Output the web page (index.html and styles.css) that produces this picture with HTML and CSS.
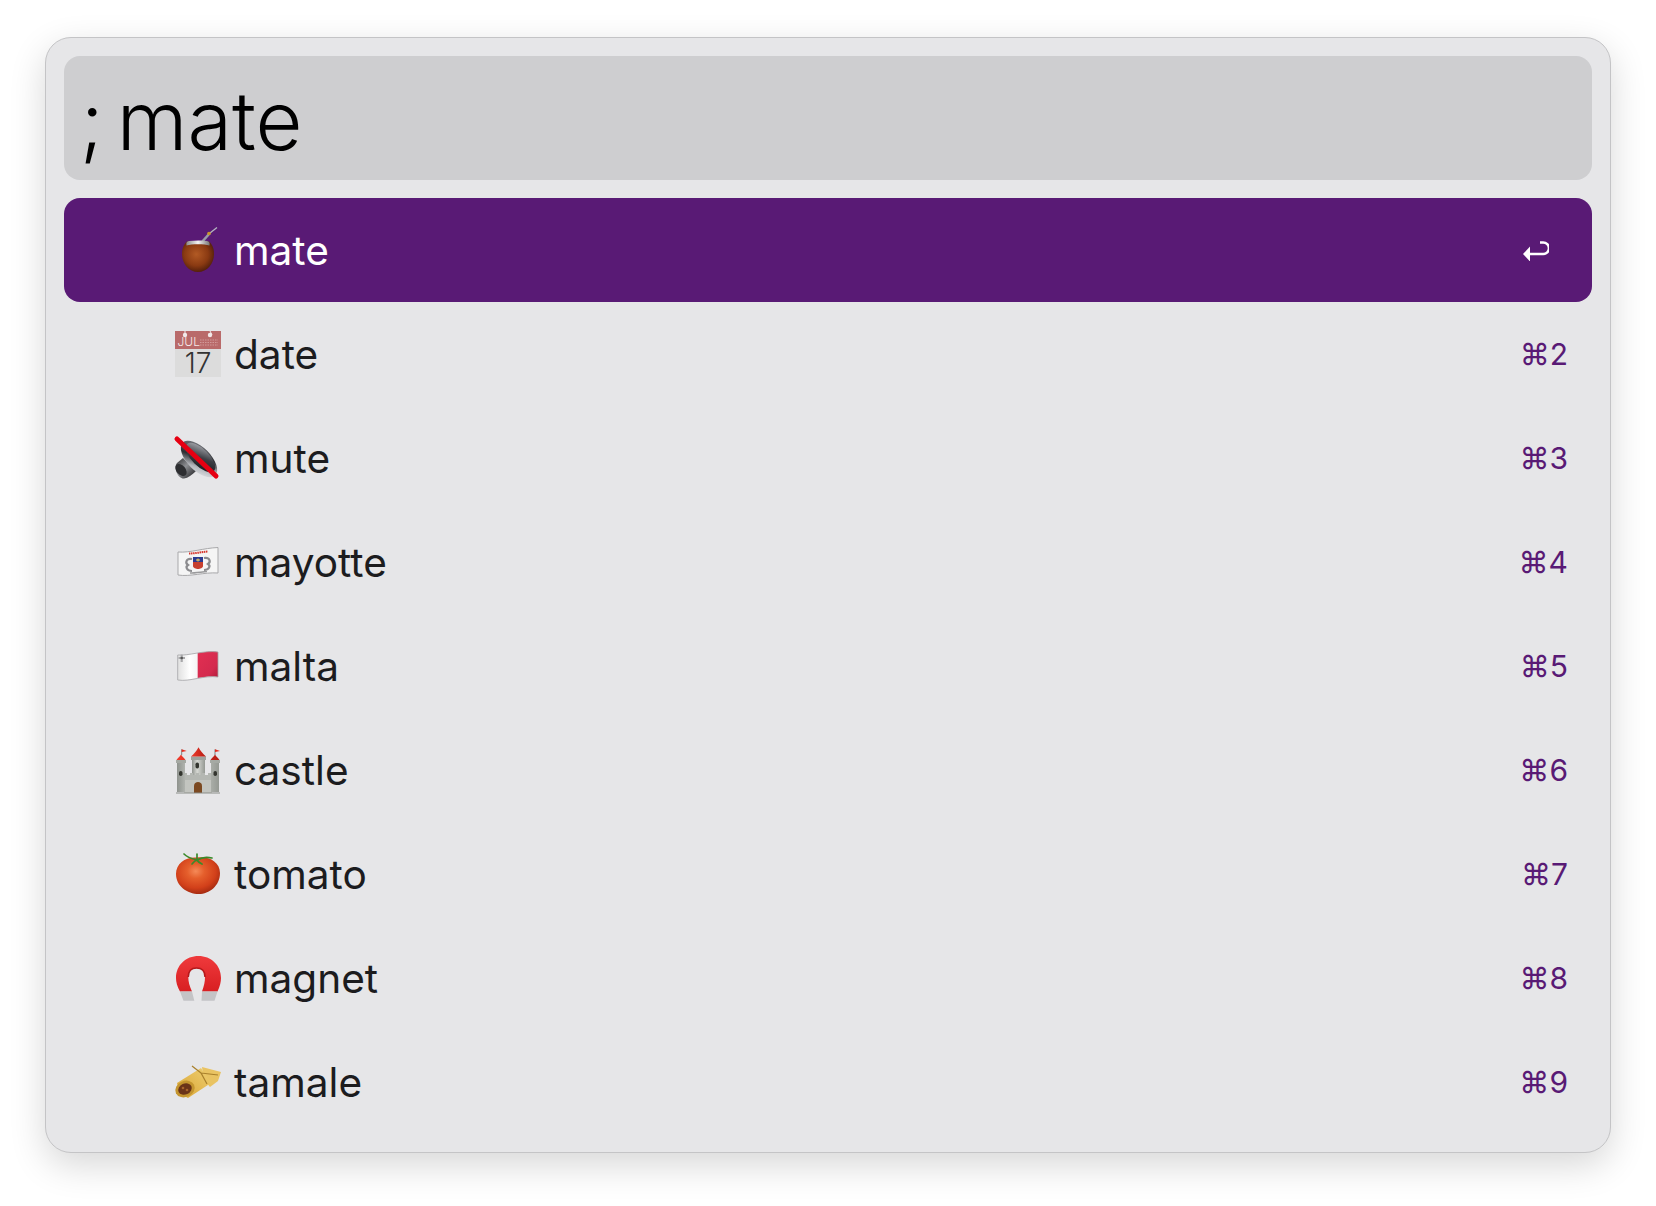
FILE: index.html
```html
<!DOCTYPE html>
<html lang="en">
<head>
<meta charset="utf-8">
<title>; mate</title>
<link rel="stylesheet" href="styles.css">
</head>
<body>
<main class="panel">
  <div class="query">; mate</div>
  <ul class="results">
    <li class="row selected">
      <svg class="icon" viewBox="0 0 48 48">
        <defs><radialGradient id="gourd" cx=".45" cy=".42" r=".62"><stop offset="0" stop-color="#b25a24"/><stop offset=".6" stop-color="#8a3a12"/><stop offset="1" stop-color="#4a1b0a"/></radialGradient>
        <linearGradient id="rim" x1="0" x2="1" y1="0" y2="0"><stop offset="0" stop-color="#8a8a8a"/><stop offset=".5" stop-color="#f4f4f4"/><stop offset="1" stop-color="#777"/></linearGradient></defs>
        <path d="M27 17 36 7" stroke="#9a9ca6" stroke-width="2.600" fill="none"/>
        <path d="M36 7 43 1.500" stroke="#b5b7c0" stroke-width="1.300" fill="none"/>
        <circle cx="35" cy="7.500" r="1.800" fill="#c9962c"/>
        <path d="M8 28C8 22 10 18 13 15.500H35C38 18 40 22 40 28 40 38 33 46 24 46S8 38 8 28Z" fill="url(#gourd)"/>
        <path d="M12.500 19.500C12 16.500 12.700 15.500 15 15 21 14.200 28 14.200 33 15 35.300 15.500 36 16.500 35.500 19.500 30 17.800 18 17.800 12.500 19.500Z" fill="url(#rim)"/>
      </svg>
      <span class="label">mate</span>
      <svg class="enter" viewBox="0 0 26 20">
        <path d="M17 1.500h3.200a5.700 5.700 0 0 1 0 11.500H5" fill="none" stroke="#fff" stroke-width="2.500"/>
        <path d="M0 13 7 5.500v15Z" fill="#fff"/>
      </svg>
    </li>
    <li class="row">
      <svg class="icon" viewBox="0 0 48 48">
        <rect x="1" y="18" width="46" height="29" fill="#dcdcdc"/>
        <rect x="1" y="1" width="46" height="18" fill="#b96a6a"/>
        <text class="cal-month" x="3.500" y="16">JUL</text>
        <path d="M26 10h18M26 12.500h18M26 15h18" stroke="#d29a9a" stroke-width="1.100" stroke-dasharray="1.500 1"/>
        <path d="M11 1V5M36 1 38 5" stroke="#f1eaea" stroke-width="1"/>
        <circle cx="11" cy="5" r="2.200" fill="#f1eaea"/><circle cx="36" cy="5" r="2.200" fill="#f1eaea"/>
        <text class="cal-day" x="24" y="43" text-anchor="middle">17</text>
      </svg>
      <span class="label">date</span><span class="keys">⌘2</span>
    </li>
    <li class="row">
      <svg class="icon" viewBox="0 0 48 48">
        <defs><linearGradient id="cone" x1="0" x2="1" y1="1" y2="0"><stop offset="0" stop-color="#f2f3f5"/><stop offset=".3" stop-color="#b4b7bc"/><stop offset=".55" stop-color="#2c2d31"/><stop offset="1" stop-color="#8d9096"/></linearGradient>
        <linearGradient id="coneInner" x1="0" x2="1" y1="1" y2="0"><stop offset="0" stop-color="#111214"/><stop offset=".5" stop-color="#3c3e44"/><stop offset="1" stop-color="#c0c2c7"/></linearGradient>
        <linearGradient id="driver" x1="0" x2="1" y1="0" y2="1"><stop offset="0" stop-color="#2a2a2c"/><stop offset=".45" stop-color="#8d8f93"/><stop offset="1" stop-color="#161618"/></linearGradient></defs>
        <path d="M9 24 3 29C-1 34 4 45 10 44.500 14 44 18 41 22 37Z" fill="url(#driver)"/>
        <ellipse cx="7" cy="36" rx="4.500" ry="7" transform="rotate(-40 7 36)" fill="#2d2e31"/>
        <ellipse cx="25" cy="25" rx="11.500" ry="23" transform="rotate(-45 25 25)" fill="url(#cone)"/>
        <ellipse cx="26.500" cy="23.500" rx="8.500" ry="19" transform="rotate(-45 26.500 23.500)" fill="url(#coneInner)"/>
        <path d="M3 5 42 42" stroke="#e60012" stroke-width="5" stroke-linecap="round"/>
      </svg>
      <span class="label">mute</span><span class="keys">⌘3</span>
    </li>
    <li class="row">
      <svg class="icon" viewBox="0 0 48 48">
        <path d="M4 14C16 15 30 10 44 9.500V35C30 34 16 39 4 37Z" fill="#f5f5f5" stroke="#a9a9ab" stroke-width="1"/>
        <path d="M15 15.500C21 15.500 28 14 34 13.500" stroke="#d6372e" stroke-width="2" stroke-dasharray="1.500 .6" fill="none"/>
        <path d="M19 19H29V24H19Z" fill="#2b3a90"/>
        <path d="M19 24H29V28C29 30 26 31 24 31S19 30 19 28Z" fill="#c7402f"/>
        <path d="M24 20.500v3M22 22h4" stroke="#f2d25a" stroke-width="1"/>
        <path d="M18 21C12 20 11 25 14 27 11 29 13 33 18 33M30 20C36 19 37 24 34 26 37 28 35 32 30 32" fill="none" stroke="#8b8b8e" stroke-width="2.200"/>
        <path d="M16 35C21 35 27 34 33 33.500" fill="none" stroke="#9a9a9c" stroke-width="1.500"/>
      </svg>
      <span class="label">mayotte</span><span class="keys">⌘4</span>
    </li>
    <li class="row">
      <svg class="icon" viewBox="0 0 48 48">
        <defs><linearGradient id="maltawhite" x1="0" x2="1"><stop offset="0" stop-color="#e0e0e0"/><stop offset=".6" stop-color="#fff"/><stop offset="1" stop-color="#f4f4f4"/></linearGradient>
        <linearGradient id="maltared" x1="0" x2="1" y1="0" y2="1"><stop offset="0" stop-color="#e22f52"/><stop offset=".7" stop-color="#d42a4e"/><stop offset="1" stop-color="#b21d3c"/></linearGradient></defs>
        <path d="M3.700 13C10 14 17 12 23.700 11V36C16 37 10 39 3.700 38Z" fill="url(#maltawhite)"/>
        <path d="M23.700 11C31 10 38 9 44 10V35C37 34 31 35 23.700 36Z" fill="url(#maltared)"/>
        <path d="M3.700 13C15 14 30 8 44 10V35C30 33 16 40 3.700 38Z" fill="none" stroke="#a5a5a7" stroke-width=".8"/>
        <path d="M4.500 16h6.500M7.700 12.500v7.500" stroke="#a8a8aa" stroke-width="2.200"/>
        <circle cx="7.700" cy="16" r="1.300" fill="#555"/>
      </svg>
      <span class="label">malta</span><span class="keys">⌘5</span>
    </li>
    <li class="row">
      <svg class="icon" viewBox="0 0 48 48">
        <defs><linearGradient id="stone" x1="0" x2="1"><stop offset="0" stop-color="#8f938e"/><stop offset=".4" stop-color="#d6d8d3"/><stop offset="1" stop-color="#959993"/></linearGradient>
        <linearGradient id="roof" x1="0" x2="1"><stop offset="0" stop-color="#f03b2c"/><stop offset="1" stop-color="#b51c12"/></linearGradient></defs>
        <path d="M10 32H38V47H10Z" fill="#c3c5c0"/>
        <path d="M18 11H31V32H18Z" fill="url(#stone)"/>
        <path d="M17 10.500H32V14H17Z" fill="#9ea29c"/>
        <path d="M10 27h3v2h3v-2h3v2h3v-2h3v2h3v-2h3v2h3v-2h3v7H10Z" fill="#b4b7b2"/>
        <path d="M3 15H11V46H3ZM37 15H45V46H37Z" fill="url(#stone)"/>
        <path d="M2 14H12V17H2ZM36 14H46V17H36Z" fill="#a5a9a3"/>
        <path d="M2.500 14C3.500 12 5.500 11 7 8.500 8.500 11 10.500 12 11.500 14ZM36.500 14C37.500 12 39.500 11 41 8.500 42.500 11 44.500 12 45.500 14Z" fill="url(#roof)"/>
        <path d="M17 10.500C20 8 22.500 5 24.500 1.300 26.500 5 29 8 32 10.500Z" fill="url(#roof)"/>
        <path d="M7.700 9V3.300M41 9V3.300" stroke="#555" stroke-width=".7"/>
        <path d="M7.700 3.300 12.700 5 7.700 6ZM41 3.300 46 5 41 6Z" fill="#e42a1d"/>
        <rect x="21.500" y="16.500" width="3.500" height="6" rx="1.700" fill="#33352f"/>
        <rect x="5" y="25" width="3.500" height="5" rx="1.700" fill="#33352f"/><rect x="39.500" y="25" width="3.500" height="5" rx="1.700" fill="#33352f"/>
        <path d="M20 47V40C20 37 22 36 24 36S28 37 28 40V47Z" fill="#7c4a22"/>
        <path d="M2 47H46" stroke="#8a8d88"/>
      </svg>
      <span class="label">castle</span><span class="keys">⌘6</span>
    </li>
    <li class="row">
      <svg class="icon" viewBox="0 0 48 48">
        <defs><radialGradient id="tomato" cx=".45" cy=".38" r=".65"><stop offset="0" stop-color="#f58a58"/><stop offset=".3" stop-color="#e55f2c"/><stop offset=".7" stop-color="#d2401a"/><stop offset="1" stop-color="#9f2810"/></radialGradient></defs>
        <path d="M2 24C2 13 12 6.500 23 7.500 35 6 46 12 46 23 46 36 35 44 25 44 13 44 2 36 2 24Z" fill="url(#tomato)"/>
        <path d="M23 10C19 9 14 8 10 4M23 10C28 7 34 7 38 8M23 10V4M23 10C24 12 26 13 28 14M23 10C20 11 19 13 18 14" stroke="#3a8a2a" stroke-width="1.700" fill="none" stroke-linecap="round"/>
      </svg>
      <span class="label">tomato</span><span class="keys">⌘7</span>
    </li>
    <li class="row">
      <svg class="icon" viewBox="0 0 48 48">
        <defs><linearGradient id="magnet" x1="0" x2="0" y1="0" y2="1"><stop offset="0" stop-color="#ef3a3c"/><stop offset="1" stop-color="#d81f22"/></linearGradient></defs>
        <path d="M6 37.500C3 32 2 28 2 24 2 11 12 2 24.500 2S47 11 47 24C47 28 46 32 43.500 37.500H28C30 32 31 28 31 23 31 18 28.500 14 22.500 14 16.500 14 14.300 18 14.300 23 14.300 28 15.500 32 18 37.500Z" fill="url(#magnet)"/>
        <path d="M14.300 23C14.300 18 16.500 14 22.500 14 28.500 14 31 18 31 23" fill="none" stroke="#b5181b" stroke-width="1.500"/>
        <path d="M6 37.500H18L20.300 46.800H9.500ZM28 37.500H43.500L40.500 46.800H27.500Z" fill="#c4c4c6"/>
      </svg>
      <span class="label">magnet</span><span class="keys">⌘8</span>
    </li>
    <li class="row">
      <svg class="icon" viewBox="0 0 48 48">
        <defs><linearGradient id="husk" x1="0" x2="1" y1="1" y2="0"><stop offset="0" stop-color="#d8a433"/><stop offset="1" stop-color="#efcf72"/></linearGradient></defs>
        <path d="M28 9 47 14 44 23 36 29 30 22Z" fill="#e9c362"/>
        <path d="M3 25 27 10 37 25 14 40C9 38 4 32 3 25Z" fill="url(#husk)"/>
        <ellipse cx="11" cy="31" rx="10" ry="8" transform="rotate(-25 11 31)" fill="#c4952f"/>
        <ellipse cx="11" cy="31" rx="7" ry="5.500" transform="rotate(-25 11 31)" fill="#6a3318"/>
        <circle cx="9" cy="30" r="1.300" fill="#a5632a"/><circle cx="13" cy="32" r="1.300" fill="#a5632a"/>
        <path d="M18 8 27 15 33 26M27 15 44 17" stroke="#a9802c" stroke-width="1.200" fill="none"/>
      </svg>
      <span class="label">tamale</span><span class="keys">⌘9</span>
    </li>
  </ul>
</main>
</body>
</html>
```
FILE: styles.css
```css
* { box-sizing: border-box; }
html, body { margin: 0; height: 100%; background: #fff; }
body { padding: 37px 45px; font-family: Inter, "Liberation Sans", sans-serif; overflow: hidden; }
.panel {
  height: 1116px;
  padding: 18px;
  background: #e6e6e8;
  border: 1px solid #c4c4c6;
  border-radius: 26px;
  box-shadow: 0 12px 36px rgba(0, 0, 0, .16);
}
.query {
  display: flex;
  align-items: center;
  height: 124px;
  padding: 6px 0 0 16px;
  background: #ceced0;
  border-radius: 16px;
  color: #000;
  font-size: 81px;
  word-spacing: -.12em;
  font-weight: 350;
}
.results { margin: 18px 0 0; padding: 0; list-style: none; }
.row {
  display: flex;
  align-items: center;
  height: 104px;
  padding: 0 24px 0 110px;
  color: #1c1c1e;
  border-radius: 16px;
}
.row.selected { background: #591a75; color: #fff; }
.icon { flex: none; width: 48px; height: 48px; overflow: visible; }
.label { margin: 1px 0 0 12px; font-size: 40.6px; flex: 1; }
.keys { color: #591a75; font-size: 30px; font-family: Inter, "DejaVu Sans", sans-serif; }
.enter { flex: none; width: 26px; height: 20px; margin: 2px 19px 0 0; }
.cal-month { font: 300 12px Inter, sans-serif; fill: #f5e7e7; }
.cal-day { font: 300 28px Inter, sans-serif; fill: #333; }
```
